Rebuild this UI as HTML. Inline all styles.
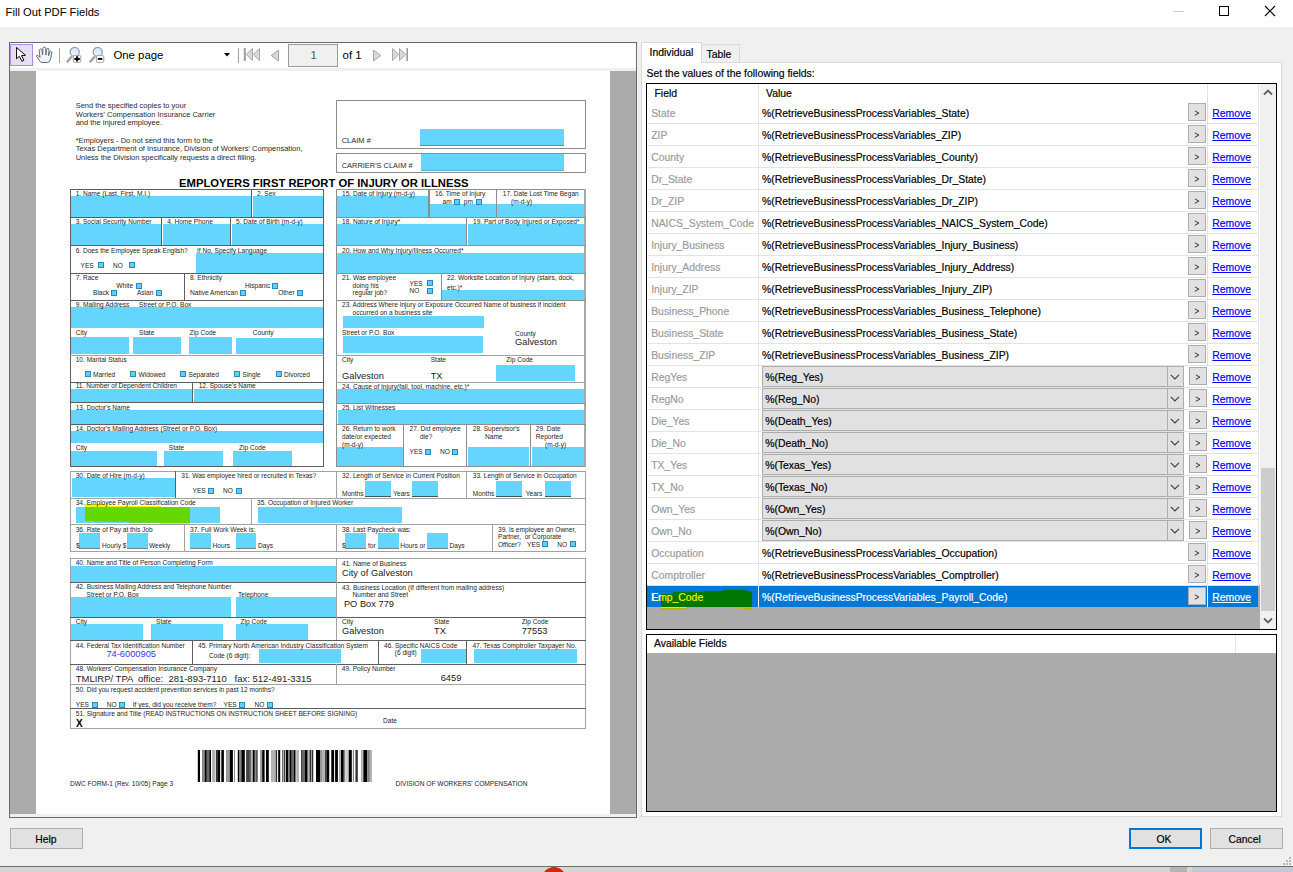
<!DOCTYPE html><html><head><meta charset="utf-8"><style>
html,body{margin:0;padding:0;width:1293px;height:872px;overflow:hidden;background:#f0f0f0;}
body{position:relative;font-family:"Liberation Sans",sans-serif;}
.t{position:absolute;white-space:pre;}
.ui{-webkit-text-stroke:0.18px currentColor;}
.r{position:absolute;}
svg{position:absolute;}
</style></head><body>
<div class="r" style="left:0px;top:0px;width:1293px;height:27px;background:#ffffff;"></div>
<div class="t " style="left:5.60px;top:7.12px;font-size:11.2px;line-height:11.2px;color:#000;">Fill Out PDF Fields</div>
<div class="r" style="left:1174px;top:11px;width:10px;height:1px;background:#c8c8c8;"></div>
<div class="r" style="left:1219px;top:6px;width:10px;height:10px;border:1px solid #000;box-sizing:border-box;"></div>
<svg style="left:1264px;top:5px" width="12" height="12"><path d="M1 1 L11 11 M11 1 L1 11" stroke="#000" stroke-width="1.1"/></svg>
<div class="r" style="left:0px;top:866px;width:1293px;height:1px;background:#6d6d6d;"></div>
<div class="r" style="left:0px;top:867px;width:1293px;height:5px;background:#d6d6d6;"></div>
<div class="r" style="left:1170px;top:867px;width:17px;height:5px;background:#b4b4b4;"></div>
<div class="r" style="left:1192px;top:867px;width:101px;height:5px;background:#c3cad6;"></div>
<svg style="left:539px;top:864px" width="30" height="8"><circle cx="15" cy="15" r="12" fill="#d42a00"/></svg>
<div class="t " style="left:1212.00px;top:870.64px;font-size:12px;line-height:12px;color:#222;font-weight:bold;">Make content</div>
<div class="r" style="left:0px;top:866px;width:1293px;height:1px;background:#6d6d6d;"></div>
<div class="r" style="left:1289px;top:857px;width:2px;height:2px;background:#b8b8b8;"></div>
<div class="r" style="left:1286px;top:860px;width:2px;height:2px;background:#b8b8b8;"></div>
<div class="r" style="left:1289px;top:860px;width:2px;height:2px;background:#b8b8b8;"></div>
<div class="r" style="left:1283px;top:863px;width:2px;height:2px;background:#b8b8b8;"></div>
<div class="r" style="left:1286px;top:863px;width:2px;height:2px;background:#b8b8b8;"></div>
<div class="r" style="left:1289px;top:863px;width:2px;height:2px;background:#b8b8b8;"></div>
<div class="r" style="left:9px;top:42px;width:628px;height:776px;background:#ffffff;border:1px solid #6a6a6a;box-sizing:border-box;"></div>
<div class="r" style="left:10px;top:68px;width:626px;height:3px;background:#f0f0f0;"></div>
<div class="r" style="left:10px;top:71px;width:626px;height:743px;background:#ababab;"></div>
<div class="r" style="left:10px;top:814px;width:626px;height:3px;background:#f0f0f0;"></div>
<div class="r" style="left:36px;top:71px;width:574px;height:743px;background:#ffffff;"></div>
<div class="r" style="left:10px;top:44px;width:23px;height:22px;background:#e6def2;border:1px solid #b18ce6;box-sizing:border-box;"></div>
<svg style="left:14px;top:46px" width="16" height="18"><path d="M2.5 1.5 L2.5 12.8 L5.3 10.3 L7.9 15.3 L9.9 14.3 L7.5 9.5 L11.5 9.3 Z" fill="#fff" stroke="#000" stroke-width="0.95"/></svg>
<svg style="left:35px;top:46px" width="18" height="18"><path d="M6 16.5 L1.6 10.6 Q1 9.2 2.8 9.3 L5 11.5 L4.2 4.6 Q4.4 2.9 5.6 2.9 Q6.7 2.9 6.9 4.3 L7.6 9 L7.8 2.6 Q8 1.1 9.3 1.1 Q10.7 1.1 10.8 2.5 L10.9 9 L11.6 3.4 Q11.9 2.2 13 2.3 Q14.1 2.5 14 3.7 L13.5 9.8 L14.8 6 Q15.2 5 16.1 5.3 Q17 5.7 16.8 6.7 L15.6 13 Q14.9 16.5 12.3 16.5 Z" fill="#f2f2f2" stroke="#5d6d82" stroke-width="1" stroke-linejoin="round"/></svg>
<div class="r" style="left:59px;top:48px;width:1px;height:15px;background:#a0a0a0;"></div>
<svg style="left:66px;top:46px" width="17" height="18"><defs><linearGradient id="lg66" x1="0" y1="0" x2="0" y2="1"><stop offset="0" stop-color="#cfe2fb"/><stop offset="1" stop-color="#f4f8ff"/></linearGradient></defs><line x1="0.8" y1="16.3" x2="5.8" y2="10.6" stroke="#a0a0a0" stroke-width="2.3"/><circle cx="8.7" cy="5.9" r="4.5" fill="url(#lg66)" stroke="#9c9c9c" stroke-width="1.3"/><rect x="7.4" y="9.4" width="7.4" height="7" rx="1.3" fill="#fff" stroke="#9a9a9a" stroke-width="0.9"/><path d="M11.1 10.3 V15.5 M8.4 12.9 H13.8" stroke="#000" stroke-width="2"/></svg>
<svg style="left:89px;top:46px" width="17" height="18"><defs><linearGradient id="lg89" x1="0" y1="0" x2="0" y2="1"><stop offset="0" stop-color="#cfe2fb"/><stop offset="1" stop-color="#f4f8ff"/></linearGradient></defs><line x1="0.8" y1="16.3" x2="5.8" y2="10.6" stroke="#a0a0a0" stroke-width="2.3"/><circle cx="8.7" cy="5.9" r="4.5" fill="url(#lg89)" stroke="#9c9c9c" stroke-width="1.3"/><rect x="7.4" y="9.4" width="7.4" height="7" rx="1.3" fill="#fff" stroke="#9a9a9a" stroke-width="0.9"/><path d="M8.9 12.9 H13.3" stroke="#000" stroke-width="1.9"/></svg>
<div class="t " style="left:113.40px;top:49.85px;font-size:11.4px;line-height:11.4px;color:#000;">One page</div>
<svg style="left:224px;top:53px" width="7" height="4"><path d="M0 0 H6 L3 3.5 Z" fill="#000"/></svg>
<div class="r" style="left:238px;top:48px;width:1px;height:15px;background:#a0a0a0;"></div>
<svg style="left:243px;top:47px" width="18" height="15"><rect x="0.8" y="1" width="2" height="13" fill="#a0a0a0"/><path d="M9.5 1.5 L3.2 7.5 L9.5 13.5 Z M16.5 1.5 L10.2 7.5 L16.5 13.5 Z" fill="#d8d8d8" stroke="#a8a8a8" stroke-width="1"/></svg>
<svg style="left:270px;top:47px" width="10" height="15"><path d="M8.5 3 L1.2 8.5 L8.5 14 Z" fill="#d8d8d8" stroke="#a8a8a8" stroke-width="1"/></svg>
<div class="r" style="left:288px;top:44px;width:50px;height:23px;background:#f0f0f0;border:1px solid #9c9c9c;box-sizing:border-box;"></div>
<div class="t " style="left:310.50px;top:50.15px;font-size:11.4px;line-height:11.4px;color:#555;">1</div>
<div class="t " style="left:342.60px;top:49.85px;font-size:11.4px;line-height:11.4px;color:#000;">of 1</div>
<svg style="left:372px;top:47px" width="10" height="15"><path d="M1.5 3 L8.8 8.5 L1.5 14 Z" fill="#d8d8d8" stroke="#a8a8a8" stroke-width="1"/></svg>
<svg style="left:391px;top:47px" width="18" height="15"><path d="M1.5 1.5 L7.8 7.5 L1.5 13.5 Z M8.5 1.5 L14.8 7.5 L8.5 13.5 Z" fill="#d8d8d8" stroke="#a8a8a8" stroke-width="1"/><rect x="15.4" y="1" width="1.6" height="13" fill="#9a9a9a"/></svg>
<div class="t " style="left:75.70px;top:102.45px;font-size:7.5px;line-height:7.5px;color:#2a2a2a;">Send the specified copies to your</div>
<div class="t " style="left:75.70px;top:110.85px;font-size:7.5px;line-height:7.5px;color:#2a2a2a;">Workers' Compensation Insurance Carrier</div>
<div class="t " style="left:75.70px;top:119.25px;font-size:7.5px;line-height:7.5px;color:#2a2a2a;">and the injured employee.</div>
<div class="t " style="left:75.70px;top:136.55px;font-size:7.5px;line-height:7.5px;color:#2a2a2a;">*Employers - Do not send this form to the</div>
<div class="t " style="left:75.70px;top:145.25px;font-size:7.5px;line-height:7.5px;color:#2a2a2a;">Texas Department of Insurance, Division of Workers' Compensation,</div>
<div class="t " style="left:75.70px;top:153.85px;font-size:7.5px;line-height:7.5px;color:#2a2a2a;">Unless the Division specifically requests a direct filling.</div>
<div class="r" style="left:336px;top:100px;width:250px;height:1px;background:#8c8c8c;"></div>
<div class="r" style="left:336px;top:148px;width:250px;height:1px;background:#8c8c8c;"></div>
<div class="r" style="left:336px;top:100px;width:1px;height:49px;background:#8c8c8c;"></div>
<div class="r" style="left:585px;top:100px;width:1px;height:49px;background:#8c8c8c;"></div>
<div class="r" style="left:420px;top:129px;width:144px;height:16px;background:#64d6fd;"></div>
<div class="r" style="left:420px;top:145px;width:144px;height:1px;background:#6a8d99;"></div>
<div class="t " style="left:341.70px;top:137.05px;font-size:7.5px;line-height:7.5px;color:#2a2a2a;">CLAIM #</div>
<div class="r" style="left:336px;top:153px;width:250px;height:1px;background:#8c8c8c;"></div>
<div class="r" style="left:336px;top:172px;width:250px;height:1px;background:#8c8c8c;"></div>
<div class="r" style="left:336px;top:153px;width:1px;height:20px;background:#8c8c8c;"></div>
<div class="r" style="left:585px;top:153px;width:1px;height:20px;background:#8c8c8c;"></div>
<div class="r" style="left:421px;top:154px;width:143px;height:16px;background:#64d6fd;"></div>
<div class="r" style="left:421px;top:170px;width:143px;height:1px;background:#4fb0d0;"></div>
<div class="t " style="left:341.70px;top:161.79px;font-size:7.45px;line-height:7.45px;color:#2a2a2a;">CARRIER'S CLAIM #</div>
<div class="t " style="left:179.10px;top:177.77px;font-size:11.25px;line-height:11.25px;color:#000;font-weight:bold;">EMPLOYERS FIRST REPORT OF INJURY OR ILLNESS</div>
<div class="r" style="left:71px;top:196px;width:180px;height:21px;background:#64d6fd;"></div>
<div class="r" style="left:253px;top:196px;width:70px;height:21px;background:#64d6fd;"></div>
<div class="r" style="left:71px;top:224px;width:90px;height:21px;background:#64d6fd;"></div>
<div class="r" style="left:163px;top:224px;width:67px;height:21px;background:#64d6fd;"></div>
<div class="r" style="left:232px;top:224px;width:91px;height:21px;background:#64d6fd;"></div>
<div class="r" style="left:196px;top:253px;width:127px;height:20px;background:#64d6fd;"></div>
<div class="r" style="left:71px;top:307px;width:252px;height:21px;background:#64d6fd;"></div>
<div class="r" style="left:71px;top:337px;width:58px;height:17px;background:#64d6fd;"></div>
<div class="r" style="left:133px;top:337px;width:48px;height:17px;background:#64d6fd;"></div>
<div class="r" style="left:189px;top:337px;width:43px;height:17px;background:#64d6fd;"></div>
<div class="r" style="left:236px;top:338px;width:87px;height:16px;background:#64d6fd;"></div>
<div class="r" style="left:71px;top:389px;width:121px;height:13px;background:#64d6fd;"></div>
<div class="r" style="left:194px;top:389px;width:129px;height:13px;background:#64d6fd;"></div>
<div class="r" style="left:71px;top:410px;width:252px;height:14px;background:#64d6fd;"></div>
<div class="r" style="left:71px;top:431px;width:252px;height:12px;background:#64d6fd;"></div>
<div class="r" style="left:71px;top:451px;width:86px;height:15px;background:#64d6fd;"></div>
<div class="r" style="left:164px;top:451px;width:59px;height:15px;background:#64d6fd;"></div>
<div class="r" style="left:233px;top:451px;width:59px;height:15px;background:#64d6fd;"></div>
<div class="r" style="left:70px;top:189px;width:254px;height:1px;background:#5e5e5e;"></div>
<div class="r" style="left:70px;top:466px;width:254px;height:1px;background:#5e5e5e;"></div>
<div class="r" style="left:70px;top:189px;width:1px;height:278px;background:#5e5e5e;"></div>
<div class="r" style="left:323px;top:189px;width:1px;height:278px;background:#5e5e5e;"></div>
<div class="r" style="left:70px;top:217px;width:254px;height:1px;background:#5e5e5e;"></div>
<div class="r" style="left:70px;top:245px;width:254px;height:1px;background:#5e5e5e;"></div>
<div class="r" style="left:70px;top:273px;width:254px;height:1px;background:#5e5e5e;"></div>
<div class="r" style="left:70px;top:300px;width:254px;height:1px;background:#5e5e5e;"></div>
<div class="r" style="left:70px;top:355px;width:254px;height:1px;background:#a2a2a2;"></div>
<div class="r" style="left:70px;top:382px;width:254px;height:1px;background:#5e5e5e;"></div>
<div class="r" style="left:70px;top:402px;width:254px;height:1px;background:#5e5e5e;"></div>
<div class="r" style="left:70px;top:424px;width:254px;height:1px;background:#5e5e5e;"></div>
<div class="r" style="left:251px;top:189px;width:1px;height:28px;background:#5e5e5e;"></div>
<div class="r" style="left:161px;top:217px;width:1px;height:28px;background:#5e5e5e;"></div>
<div class="r" style="left:230px;top:217px;width:1px;height:28px;background:#5e5e5e;"></div>
<div class="r" style="left:184px;top:273px;width:1px;height:27px;background:#5e5e5e;"></div>
<div class="r" style="left:192px;top:382px;width:1px;height:20px;background:#5e5e5e;"></div>
<div class="t " style="left:75.70px;top:191.24px;font-size:6.57px;line-height:6.57px;color:#1e1e1e;">1. Name (Last, First, M.I.)</div>
<div class="t " style="left:257.00px;top:191.24px;font-size:6.57px;line-height:6.57px;color:#1e1e1e;">2. Sex</div>
<div class="t " style="left:75.70px;top:219.24px;font-size:6.57px;line-height:6.57px;color:#1e1e1e;">3. Social Security Number</div>
<div class="t " style="left:167.20px;top:219.24px;font-size:6.57px;line-height:6.57px;color:#1e1e1e;">4. Home Phone</div>
<div class="t " style="left:236.00px;top:219.24px;font-size:6.57px;line-height:6.57px;color:#1e1e1e;">5. Date of Birth (m-d-y)</div>
<div class="t " style="left:75.70px;top:248.04px;font-size:6.57px;line-height:6.57px;color:#1e1e1e;">6. Does the Employee Speak English?</div>
<div class="t " style="left:197.00px;top:248.04px;font-size:6.57px;line-height:6.57px;color:#1e1e1e;">If No, Specify Language</div>
<div class="t " style="left:80.60px;top:262.84px;font-size:6.57px;line-height:6.57px;color:#1e1e1e;">YES</div>
<div class="r" style="left:98px;top:262px;width:6px;height:6px;background:#5fd0f5;border:1px solid #2a8ab8;box-sizing:border-box;"></div>
<div class="t " style="left:113.00px;top:262.84px;font-size:6.57px;line-height:6.57px;color:#1e1e1e;">NO</div>
<div class="r" style="left:129px;top:262px;width:6px;height:6px;background:#5fd0f5;border:1px solid #2a8ab8;box-sizing:border-box;"></div>
<div class="t " style="left:75.70px;top:275.24px;font-size:6.57px;line-height:6.57px;color:#1e1e1e;">7. Race</div>
<div class="t " style="left:116.30px;top:282.84px;font-size:6.57px;line-height:6.57px;color:#1e1e1e;">White</div>
<div class="r" style="left:136px;top:283px;width:6px;height:6px;background:#5fd0f5;border:1px solid #2a8ab8;box-sizing:border-box;"></div>
<div class="t " style="left:93.00px;top:290.44px;font-size:6.57px;line-height:6.57px;color:#1e1e1e;">Black</div>
<div class="r" style="left:111px;top:290px;width:6px;height:6px;background:#5fd0f5;border:1px solid #2a8ab8;box-sizing:border-box;"></div>
<div class="t " style="left:136.90px;top:290.44px;font-size:6.57px;line-height:6.57px;color:#1e1e1e;">Asian</div>
<div class="r" style="left:156px;top:290px;width:6px;height:6px;background:#5fd0f5;border:1px solid #2a8ab8;box-sizing:border-box;"></div>
<div class="t " style="left:190.00px;top:275.24px;font-size:6.57px;line-height:6.57px;color:#1e1e1e;">8. Ethnicity</div>
<div class="t " style="left:245.00px;top:282.84px;font-size:6.57px;line-height:6.57px;color:#1e1e1e;">Hispanic</div>
<div class="r" style="left:272px;top:283px;width:6px;height:6px;background:#5fd0f5;border:1px solid #2a8ab8;box-sizing:border-box;"></div>
<div class="t " style="left:190.00px;top:290.44px;font-size:6.57px;line-height:6.57px;color:#1e1e1e;">Native American</div>
<div class="r" style="left:240px;top:290px;width:6px;height:6px;background:#5fd0f5;border:1px solid #2a8ab8;box-sizing:border-box;"></div>
<div class="t " style="left:278.20px;top:290.44px;font-size:6.57px;line-height:6.57px;color:#1e1e1e;">Other</div>
<div class="r" style="left:297px;top:290px;width:6px;height:6px;background:#5fd0f5;border:1px solid #2a8ab8;box-sizing:border-box;"></div>
<div class="t " style="left:75.70px;top:302.24px;font-size:6.57px;line-height:6.57px;color:#1e1e1e;">9. Mailing Address</div>
<div class="t " style="left:139.00px;top:302.24px;font-size:6.57px;line-height:6.57px;color:#1e1e1e;">Street or P.O. Box</div>
<div class="t " style="left:75.70px;top:330.24px;font-size:6.57px;line-height:6.57px;color:#1e1e1e;">City</div>
<div class="t " style="left:139.00px;top:330.24px;font-size:6.57px;line-height:6.57px;color:#1e1e1e;">State</div>
<div class="t " style="left:189.60px;top:330.24px;font-size:6.57px;line-height:6.57px;color:#1e1e1e;">Zip Code</div>
<div class="t " style="left:252.80px;top:330.24px;font-size:6.57px;line-height:6.57px;color:#1e1e1e;">County</div>
<div class="t " style="left:75.70px;top:356.84px;font-size:6.57px;line-height:6.57px;color:#1e1e1e;">10. Marital Status</div>
<div class="r" style="left:85px;top:371px;width:6px;height:6px;background:#5fd0f5;border:1px solid #2a8ab8;box-sizing:border-box;"></div>
<div class="t " style="left:93.00px;top:372.24px;font-size:6.57px;line-height:6.57px;color:#1e1e1e;">Married</div>
<div class="r" style="left:130px;top:371px;width:6px;height:6px;background:#5fd0f5;border:1px solid #2a8ab8;box-sizing:border-box;"></div>
<div class="t " style="left:138.50px;top:372.24px;font-size:6.57px;line-height:6.57px;color:#1e1e1e;">Widowed</div>
<div class="r" style="left:180px;top:371px;width:6px;height:6px;background:#5fd0f5;border:1px solid #2a8ab8;box-sizing:border-box;"></div>
<div class="t " style="left:188.50px;top:372.24px;font-size:6.57px;line-height:6.57px;color:#1e1e1e;">Separated</div>
<div class="r" style="left:234px;top:371px;width:6px;height:6px;background:#5fd0f5;border:1px solid #2a8ab8;box-sizing:border-box;"></div>
<div class="t " style="left:242.50px;top:372.24px;font-size:6.57px;line-height:6.57px;color:#1e1e1e;">Single</div>
<div class="r" style="left:276px;top:371px;width:6px;height:6px;background:#5fd0f5;border:1px solid #2a8ab8;box-sizing:border-box;"></div>
<div class="t " style="left:284.00px;top:372.24px;font-size:6.57px;line-height:6.57px;color:#1e1e1e;">Divorced</div>
<div class="t " style="left:75.70px;top:383.24px;font-size:6.57px;line-height:6.57px;color:#1e1e1e;">11. Number of Dependent Children</div>
<div class="t " style="left:198.70px;top:383.24px;font-size:6.57px;line-height:6.57px;color:#1e1e1e;">12. Spouse's Name</div>
<div class="t " style="left:75.70px;top:404.64px;font-size:6.57px;line-height:6.57px;color:#1e1e1e;">13. Doctor's Name</div>
<div class="t " style="left:75.70px;top:425.74px;font-size:6.57px;line-height:6.57px;color:#1e1e1e;">14. Doctor's Mailing Address (Street or P.O. Box)</div>
<div class="t " style="left:75.70px;top:445.24px;font-size:6.57px;line-height:6.57px;color:#1e1e1e;">City</div>
<div class="t " style="left:168.80px;top:445.24px;font-size:6.57px;line-height:6.57px;color:#1e1e1e;">State</div>
<div class="t " style="left:239.00px;top:445.24px;font-size:6.57px;line-height:6.57px;color:#1e1e1e;">Zip Code</div>
<div class="r" style="left:337px;top:196px;width:91px;height:21px;background:#64d6fd;"></div>
<div class="r" style="left:430px;top:204px;width:66px;height:13px;background:#64d6fd;"></div>
<div class="r" style="left:497px;top:204px;width:88px;height:13px;background:#64d6fd;"></div>
<div class="r" style="left:337px;top:224px;width:129px;height:21px;background:#64d6fd;"></div>
<div class="r" style="left:468px;top:224px;width:117px;height:21px;background:#64d6fd;"></div>
<div class="r" style="left:337px;top:253px;width:248px;height:20px;background:#64d6fd;"></div>
<div class="r" style="left:442px;top:290px;width:143px;height:10px;background:#64d6fd;"></div>
<div class="r" style="left:343px;top:316px;width:141px;height:12px;background:#64d6fd;"></div>
<div class="r" style="left:343px;top:336px;width:140px;height:17px;background:#64d6fd;"></div>
<div class="r" style="left:496px;top:365px;width:79px;height:16px;background:#64d6fd;"></div>
<div class="r" style="left:337px;top:389px;width:248px;height:14px;background:#64d6fd;"></div>
<div class="r" style="left:338px;top:410px;width:247px;height:14px;background:#64d6fd;"></div>
<div class="r" style="left:337px;top:447px;width:66px;height:19px;background:#64d6fd;"></div>
<div class="r" style="left:468px;top:447px;width:61px;height:19px;background:#64d6fd;"></div>
<div class="r" style="left:532px;top:447px;width:53px;height:19px;background:#64d6fd;"></div>
<div class="r" style="left:336px;top:189px;width:250px;height:1px;background:#8e8e8e;"></div>
<div class="r" style="left:336px;top:466px;width:250px;height:1px;background:#8e8e8e;"></div>
<div class="r" style="left:336px;top:189px;width:1px;height:278px;background:#8e8e8e;"></div>
<div class="r" style="left:585px;top:189px;width:1px;height:278px;background:#8e8e8e;"></div>
<div class="r" style="left:584px;top:189px;width:2px;height:278px;background:#a8a8a8;"></div>
<div class="r" style="left:336px;top:217px;width:250px;height:1px;background:#8e8e8e;"></div>
<div class="r" style="left:336px;top:245px;width:250px;height:1px;background:#8e8e8e;"></div>
<div class="r" style="left:336px;top:273px;width:250px;height:1px;background:#8e8e8e;"></div>
<div class="r" style="left:336px;top:300px;width:250px;height:1px;background:#8e8e8e;"></div>
<div class="r" style="left:336px;top:355px;width:250px;height:1px;background:#a2a2a2;"></div>
<div class="r" style="left:336px;top:382px;width:250px;height:1px;background:#a2a2a2;"></div>
<div class="r" style="left:336px;top:403px;width:250px;height:1px;background:#8e8e8e;"></div>
<div class="r" style="left:336px;top:424px;width:250px;height:1px;background:#8e8e8e;"></div>
<div class="r" style="left:428px;top:189px;width:2px;height:28px;background:#8e8e8e;"></div>
<div class="r" style="left:496px;top:189px;width:1px;height:28px;background:#8e8e8e;"></div>
<div class="r" style="left:466px;top:217px;width:1px;height:28px;background:#8e8e8e;"></div>
<div class="r" style="left:441px;top:273px;width:1px;height:27px;background:#8e8e8e;"></div>
<div class="r" style="left:403px;top:424px;width:1px;height:42px;background:#8e8e8e;"></div>
<div class="r" style="left:466px;top:424px;width:1px;height:42px;background:#8e8e8e;"></div>
<div class="r" style="left:530px;top:424px;width:1px;height:42px;background:#8e8e8e;"></div>
<div class="t " style="left:342.00px;top:191.24px;font-size:6.57px;line-height:6.57px;color:#1e1e1e;">15. Date of Injury (m-d-y)</div>
<div class="t " style="left:435.00px;top:191.24px;font-size:6.57px;line-height:6.57px;color:#1e1e1e;">16. Time of Injury</div>
<div class="t " style="left:442.60px;top:199.24px;font-size:6.57px;line-height:6.57px;color:#1e1e1e;">am</div>
<div class="r" style="left:454px;top:199px;width:6px;height:6px;background:#5fd0f5;border:1px solid #2a8ab8;box-sizing:border-box;"></div>
<div class="t " style="left:463.80px;top:199.24px;font-size:6.57px;line-height:6.57px;color:#1e1e1e;">pm</div>
<div class="r" style="left:476px;top:199px;width:6px;height:6px;background:#5fd0f5;border:1px solid #2a8ab8;box-sizing:border-box;"></div>
<div class="t " style="left:502.80px;top:191.24px;font-size:6.57px;line-height:6.57px;color:#1e1e1e;">17. Date Lost Time Began</div>
<div class="t " style="left:511.00px;top:199.24px;font-size:6.57px;line-height:6.57px;color:#1e1e1e;">(m-d-y)</div>
<div class="t " style="left:342.00px;top:219.24px;font-size:6.57px;line-height:6.57px;color:#1e1e1e;">18. Nature of Injury*</div>
<div class="t " style="left:473.00px;top:219.24px;font-size:6.57px;line-height:6.57px;color:#1e1e1e;">19. Part of Body Injured or Exposed*</div>
<div class="t " style="left:342.00px;top:247.94px;font-size:6.57px;line-height:6.57px;color:#1e1e1e;">20. How and Why Injury/Illness Occurred*</div>
<div class="t " style="left:342.00px;top:275.44px;font-size:6.57px;line-height:6.57px;color:#1e1e1e;">21. Was employee</div>
<div class="t " style="left:352.50px;top:282.94px;font-size:6.57px;line-height:6.57px;color:#1e1e1e;">doing his</div>
<div class="t " style="left:352.50px;top:290.24px;font-size:6.57px;line-height:6.57px;color:#1e1e1e;">regular job?</div>
<div class="t " style="left:409.60px;top:280.84px;font-size:6.57px;line-height:6.57px;color:#1e1e1e;">YES</div>
<div class="r" style="left:427px;top:280px;width:6px;height:6px;background:#5fd0f5;border:1px solid #2a8ab8;box-sizing:border-box;"></div>
<div class="t " style="left:409.60px;top:288.24px;font-size:6.57px;line-height:6.57px;color:#1e1e1e;">NO</div>
<div class="r" style="left:427px;top:288px;width:6px;height:6px;background:#5fd0f5;border:1px solid #2a8ab8;box-sizing:border-box;"></div>
<div class="t " style="left:447.00px;top:275.44px;font-size:6.57px;line-height:6.57px;color:#1e1e1e;">22. Worksite Location of Injury (stairs, dock,</div>
<div class="t " style="left:447.00px;top:284.94px;font-size:6.57px;line-height:6.57px;color:#1e1e1e;">etc.)*</div>
<div class="t " style="left:342.00px;top:302.44px;font-size:6.57px;line-height:6.57px;color:#1e1e1e;">23. Address Where Injury or Exposure Occurred Name of business if incident</div>
<div class="t " style="left:352.60px;top:309.84px;font-size:6.57px;line-height:6.57px;color:#1e1e1e;">occurred on a business site</div>
<div class="t " style="left:342.00px;top:330.04px;font-size:6.57px;line-height:6.57px;color:#1e1e1e;">Street or P.O. Box</div>
<div class="t " style="left:515.00px;top:330.64px;font-size:6.57px;line-height:6.57px;color:#1e1e1e;">County</div>
<div class="t " style="left:515.00px;top:338.13px;font-size:9.3px;line-height:9.3px;color:#222;">Galveston</div>
<div class="t " style="left:342.00px;top:357.44px;font-size:6.57px;line-height:6.57px;color:#1e1e1e;">City</div>
<div class="t " style="left:430.70px;top:357.44px;font-size:6.57px;line-height:6.57px;color:#1e1e1e;">State</div>
<div class="t " style="left:506.30px;top:357.24px;font-size:6.57px;line-height:6.57px;color:#1e1e1e;">Zip Code</div>
<div class="t " style="left:342.00px;top:372.43px;font-size:9.3px;line-height:9.3px;color:#222;">Galveston</div>
<div class="t " style="left:430.70px;top:372.43px;font-size:9.3px;line-height:9.3px;color:#222;">TX</div>
<div class="t " style="left:342.00px;top:383.94px;font-size:6.57px;line-height:6.57px;color:#1e1e1e;">24. Cause of Injury(fall, tool, machine, etc.)*</div>
<div class="t " style="left:342.00px;top:404.54px;font-size:6.57px;line-height:6.57px;color:#1e1e1e;">25. List Witnesses</div>
<div class="t " style="left:342.00px;top:426.44px;font-size:6.57px;line-height:6.57px;color:#1e1e1e;">26. Return to work</div>
<div class="t " style="left:342.00px;top:433.84px;font-size:6.57px;line-height:6.57px;color:#1e1e1e;">date/or expected</div>
<div class="t " style="left:342.00px;top:441.64px;font-size:6.57px;line-height:6.57px;color:#1e1e1e;">(m-d-y)</div>
<div class="t " style="left:409.60px;top:426.44px;font-size:6.57px;line-height:6.57px;color:#1e1e1e;">27. Did employee</div>
<div class="t " style="left:419.90px;top:433.84px;font-size:6.57px;line-height:6.57px;color:#1e1e1e;">die?</div>
<div class="t " style="left:409.60px;top:449.04px;font-size:6.57px;line-height:6.57px;color:#1e1e1e;">YES</div>
<div class="r" style="left:425px;top:449px;width:6px;height:6px;background:#5fd0f5;border:1px solid #2a8ab8;box-sizing:border-box;"></div>
<div class="t " style="left:439.90px;top:449.04px;font-size:6.57px;line-height:6.57px;color:#1e1e1e;">NO</div>
<div class="r" style="left:452px;top:449px;width:6px;height:6px;background:#5fd0f5;border:1px solid #2a8ab8;box-sizing:border-box;"></div>
<div class="t " style="left:472.80px;top:426.44px;font-size:6.57px;line-height:6.57px;color:#1e1e1e;">28. Supervisor's</div>
<div class="t " style="left:485.00px;top:433.84px;font-size:6.57px;line-height:6.57px;color:#1e1e1e;">Name</div>
<div class="t " style="left:535.80px;top:426.44px;font-size:6.57px;line-height:6.57px;color:#1e1e1e;">29. Date</div>
<div class="t " style="left:535.80px;top:433.84px;font-size:6.57px;line-height:6.57px;color:#1e1e1e;">Reported</div>
<div class="t " style="left:545.00px;top:441.64px;font-size:6.57px;line-height:6.57px;color:#1e1e1e;">(m-d-y)</div>
<div class="r" style="left:72px;top:478px;width:103px;height:19px;background:#64d6fd;"></div>
<div class="r" style="left:365px;top:481px;width:26px;height:16px;background:#64d6fd;"></div>
<div class="r" style="left:365px;top:496px;width:26px;height:1px;background:#3c5a66;"></div>
<div class="r" style="left:412px;top:481px;width:26px;height:16px;background:#64d6fd;"></div>
<div class="r" style="left:412px;top:496px;width:26px;height:1px;background:#3c5a66;"></div>
<div class="r" style="left:496px;top:481px;width:26px;height:16px;background:#64d6fd;"></div>
<div class="r" style="left:496px;top:496px;width:26px;height:1px;background:#3c5a66;"></div>
<div class="r" style="left:545px;top:481px;width:26px;height:16px;background:#64d6fd;"></div>
<div class="r" style="left:545px;top:496px;width:26px;height:1px;background:#3c5a66;"></div>
<div class="r" style="left:76px;top:507px;width:144px;height:16px;background:#64d6fd;"></div>
<div class="r" style="left:258px;top:507px;width:144px;height:16px;background:#64d6fd;"></div>
<div class="r" style="left:79px;top:533px;width:21px;height:15px;background:#64d6fd;"></div>
<div class="r" style="left:79px;top:548px;width:21px;height:1px;background:#6f8890;"></div>
<div class="r" style="left:127px;top:533px;width:21px;height:15px;background:#64d6fd;"></div>
<div class="r" style="left:127px;top:548px;width:21px;height:1px;background:#6f8890;"></div>
<div class="r" style="left:190px;top:533px;width:21px;height:15px;background:#64d6fd;"></div>
<div class="r" style="left:190px;top:548px;width:21px;height:1px;background:#6f8890;"></div>
<div class="r" style="left:236px;top:533px;width:20px;height:15px;background:#64d6fd;"></div>
<div class="r" style="left:236px;top:548px;width:20px;height:1px;background:#6f8890;"></div>
<div class="r" style="left:345px;top:533px;width:21px;height:15px;background:#64d6fd;"></div>
<div class="r" style="left:345px;top:548px;width:21px;height:1px;background:#6f8890;"></div>
<div class="r" style="left:378px;top:533px;width:21px;height:15px;background:#64d6fd;"></div>
<div class="r" style="left:378px;top:548px;width:21px;height:1px;background:#6f8890;"></div>
<div class="r" style="left:427px;top:533px;width:21px;height:15px;background:#64d6fd;"></div>
<div class="r" style="left:427px;top:548px;width:21px;height:1px;background:#6f8890;"></div>
<svg style="left:84px;top:503px" width="107" height="22"><path d="M1 1 H23 V3 H77 V4.2 H1 Z" fill="#f6f600"/><path d="M1 4 H106 V20.5 H76 V19.8 H45 V18.8 H10 V17.9 H1 Z" fill="#64d800"/><path d="M76 20.3 H106 V21.2 H76 Z" fill="#e8e800"/></svg>
<div class="r" style="left:70px;top:471px;width:516px;height:1px;background:#a2a2a2;"></div>
<div class="r" style="left:70px;top:551px;width:516px;height:1px;background:#a2a2a2;"></div>
<div class="r" style="left:70px;top:471px;width:1px;height:81px;background:#a2a2a2;"></div>
<div class="r" style="left:585px;top:471px;width:1px;height:81px;background:#a2a2a2;"></div>
<div class="r" style="left:70px;top:498px;width:516px;height:1px;background:#a2a2a2;"></div>
<div class="r" style="left:70px;top:524px;width:516px;height:1px;background:#a2a2a2;"></div>
<div class="r" style="left:175px;top:471px;width:1px;height:27px;background:#5e5e5e;"></div>
<div class="r" style="left:336px;top:471px;width:1px;height:27px;background:#a2a2a2;"></div>
<div class="r" style="left:466px;top:471px;width:1px;height:27px;background:#a2a2a2;"></div>
<div class="r" style="left:251px;top:498px;width:1px;height:26px;background:#a2a2a2;"></div>
<div class="r" style="left:184px;top:524px;width:1px;height:27px;background:#a2a2a2;"></div>
<div class="r" style="left:336px;top:524px;width:1px;height:27px;background:#a2a2a2;"></div>
<div class="r" style="left:492px;top:524px;width:1px;height:27px;background:#a2a2a2;"></div>
<div class="t " style="left:75.70px;top:473.04px;font-size:6.57px;line-height:6.57px;color:#1e1e1e;">30. Date of Hire (m-d-y)</div>
<div class="t " style="left:181.30px;top:473.04px;font-size:6.57px;line-height:6.57px;color:#1e1e1e;">31. Was employee hired or recruited in Texas?</div>
<div class="t " style="left:192.50px;top:488.04px;font-size:6.57px;line-height:6.57px;color:#1e1e1e;">YES</div>
<div class="r" style="left:208px;top:488px;width:6px;height:6px;background:#5fd0f5;border:1px solid #2a8ab8;box-sizing:border-box;"></div>
<div class="t " style="left:223.00px;top:488.04px;font-size:6.57px;line-height:6.57px;color:#1e1e1e;">NO</div>
<div class="r" style="left:236px;top:488px;width:6px;height:6px;background:#5fd0f5;border:1px solid #2a8ab8;box-sizing:border-box;"></div>
<div class="t " style="left:342.00px;top:473.04px;font-size:6.57px;line-height:6.57px;color:#1e1e1e;">32. Length of Service in Current Position</div>
<div class="t " style="left:342.00px;top:491.14px;font-size:6.57px;line-height:6.57px;color:#1e1e1e;">Months</div>
<div class="t " style="left:393.30px;top:491.14px;font-size:6.57px;line-height:6.57px;color:#1e1e1e;">Years</div>
<div class="t " style="left:472.80px;top:473.04px;font-size:6.57px;line-height:6.57px;color:#1e1e1e;">33. Length of Service in Occupation</div>
<div class="t " style="left:472.80px;top:491.14px;font-size:6.57px;line-height:6.57px;color:#1e1e1e;">Months</div>
<div class="t " style="left:525.80px;top:491.14px;font-size:6.57px;line-height:6.57px;color:#1e1e1e;">Years</div>
<div class="t " style="left:75.70px;top:499.74px;font-size:6.57px;line-height:6.57px;color:#1e1e1e;">34. Employee Payroll Classification Code</div>
<div class="t " style="left:257.00px;top:499.74px;font-size:6.57px;line-height:6.57px;color:#1e1e1e;">35. Occupation of Injured Worker</div>
<div class="t " style="left:75.70px;top:526.54px;font-size:6.57px;line-height:6.57px;color:#1e1e1e;">36. Rate of Pay at this Job</div>
<div class="t " style="left:76.00px;top:542.74px;font-size:6.57px;line-height:6.57px;color:#1e1e1e;">$</div>
<div class="t " style="left:102.00px;top:542.74px;font-size:6.57px;line-height:6.57px;color:#1e1e1e;">Hourly $</div>
<div class="t " style="left:149.00px;top:542.74px;font-size:6.57px;line-height:6.57px;color:#1e1e1e;">Weekly</div>
<div class="t " style="left:190.00px;top:526.94px;font-size:6.57px;line-height:6.57px;color:#1e1e1e;">37. Full Work Week is:</div>
<div class="t " style="left:212.60px;top:542.74px;font-size:6.57px;line-height:6.57px;color:#1e1e1e;">Hours</div>
<div class="t " style="left:258.00px;top:542.74px;font-size:6.57px;line-height:6.57px;color:#1e1e1e;">Days</div>
<div class="t " style="left:342.00px;top:526.54px;font-size:6.57px;line-height:6.57px;color:#1e1e1e;">38. Last Paycheck was:</div>
<div class="t " style="left:342.00px;top:542.74px;font-size:6.57px;line-height:6.57px;color:#1e1e1e;">$</div>
<div class="t " style="left:368.00px;top:542.74px;font-size:6.57px;line-height:6.57px;color:#1e1e1e;">for</div>
<div class="t " style="left:400.20px;top:542.74px;font-size:6.57px;line-height:6.57px;color:#1e1e1e;">Hours or</div>
<div class="t " style="left:449.60px;top:542.74px;font-size:6.57px;line-height:6.57px;color:#1e1e1e;">Days</div>
<div class="t " style="left:498.00px;top:526.54px;font-size:6.57px;line-height:6.57px;color:#1e1e1e;">39. Is employee an Owner,</div>
<div class="t " style="left:498.00px;top:534.44px;font-size:6.57px;line-height:6.57px;color:#1e1e1e;">Partner,  or Corporate</div>
<div class="t " style="left:498.00px;top:541.64px;font-size:6.57px;line-height:6.57px;color:#1e1e1e;">Officer?</div>
<div class="t " style="left:527.00px;top:541.64px;font-size:6.57px;line-height:6.57px;color:#1e1e1e;">YES</div>
<div class="r" style="left:542px;top:541px;width:6px;height:6px;background:#5fd0f5;border:1px solid #2a8ab8;box-sizing:border-box;"></div>
<div class="t " style="left:557.20px;top:541.64px;font-size:6.57px;line-height:6.57px;color:#1e1e1e;">NO</div>
<div class="r" style="left:570px;top:541px;width:6px;height:6px;background:#5fd0f5;border:1px solid #2a8ab8;box-sizing:border-box;"></div>
<div class="r" style="left:71px;top:566px;width:265px;height:16px;background:#64d6fd;"></div>
<div class="r" style="left:71px;top:597px;width:160px;height:20px;background:#64d6fd;"></div>
<div class="r" style="left:236px;top:597px;width:100px;height:20px;background:#64d6fd;"></div>
<div class="r" style="left:71px;top:624px;width:72px;height:16px;background:#64d6fd;"></div>
<div class="r" style="left:151px;top:624px;width:72px;height:16px;background:#64d6fd;"></div>
<div class="r" style="left:236px;top:624px;width:72px;height:16px;background:#64d6fd;"></div>
<div class="r" style="left:259px;top:649px;width:82px;height:14px;background:#64d6fd;"></div>
<div class="r" style="left:421px;top:649px;width:46px;height:14px;background:#64d6fd;"></div>
<div class="r" style="left:474px;top:649px;width:103px;height:14px;background:#64d6fd;"></div>
<div class="r" style="left:70px;top:558px;width:516px;height:1px;background:#a2a2a2;"></div>
<div class="r" style="left:70px;top:728px;width:516px;height:1px;background:#a2a2a2;"></div>
<div class="r" style="left:70px;top:558px;width:1px;height:171px;background:#a2a2a2;"></div>
<div class="r" style="left:585px;top:558px;width:1px;height:171px;background:#a2a2a2;"></div>
<div class="r" style="left:70px;top:582px;width:516px;height:1px;background:#5e5e5e;"></div>
<div class="r" style="left:70px;top:617px;width:516px;height:1px;background:#5e5e5e;"></div>
<div class="r" style="left:70px;top:640px;width:516px;height:1px;background:#5e5e5e;"></div>
<div class="r" style="left:70px;top:664px;width:516px;height:1px;background:#5e5e5e;"></div>
<div class="r" style="left:70px;top:684px;width:516px;height:1px;background:#a2a2a2;"></div>
<div class="r" style="left:70px;top:708px;width:516px;height:1px;background:#5e5e5e;"></div>
<div class="r" style="left:336px;top:558px;width:1px;height:82px;background:#a2a2a2;"></div>
<div class="r" style="left:192px;top:640px;width:1px;height:24px;background:#5e5e5e;"></div>
<div class="r" style="left:378px;top:640px;width:1px;height:24px;background:#5e5e5e;"></div>
<div class="r" style="left:466px;top:640px;width:1px;height:24px;background:#5e5e5e;"></div>
<div class="r" style="left:336px;top:664px;width:1px;height:20px;background:#a2a2a2;"></div>
<div class="t " style="left:75.70px;top:560.44px;font-size:6.57px;line-height:6.57px;color:#1e1e1e;">40. Name and Title of Person Completing Form</div>
<div class="t " style="left:342.00px;top:560.94px;font-size:6.57px;line-height:6.57px;color:#1e1e1e;">41. Name of Business</div>
<div class="t " style="left:342.00px;top:568.73px;font-size:9.3px;line-height:9.3px;color:#222;">City of Galveston</div>
<div class="t " style="left:75.70px;top:584.04px;font-size:6.57px;line-height:6.57px;color:#1e1e1e;">42. Business Mailing Address and Telephone Number</div>
<div class="t " style="left:86.50px;top:591.54px;font-size:6.57px;line-height:6.57px;color:#1e1e1e;">Street or P.O. Box</div>
<div class="t " style="left:238.00px;top:591.64px;font-size:6.57px;line-height:6.57px;color:#1e1e1e;">Telephone</div>
<div class="t " style="left:342.00px;top:584.74px;font-size:6.57px;line-height:6.57px;color:#1e1e1e;">43. Business Location (If different from mailing address)</div>
<div class="t " style="left:352.60px;top:592.34px;font-size:6.57px;line-height:6.57px;color:#1e1e1e;">Number and Street</div>
<div class="t " style="left:343.90px;top:600.33px;font-size:9.3px;line-height:9.3px;color:#222;">PO Box 779</div>
<div class="t " style="left:75.70px;top:618.64px;font-size:6.57px;line-height:6.57px;color:#1e1e1e;">City</div>
<div class="t " style="left:156.00px;top:618.64px;font-size:6.57px;line-height:6.57px;color:#1e1e1e;">State</div>
<div class="t " style="left:240.50px;top:618.64px;font-size:6.57px;line-height:6.57px;color:#1e1e1e;">Zip Code</div>
<div class="t " style="left:342.00px;top:619.44px;font-size:6.57px;line-height:6.57px;color:#1e1e1e;">City</div>
<div class="t " style="left:434.00px;top:619.44px;font-size:6.57px;line-height:6.57px;color:#1e1e1e;">State</div>
<div class="t " style="left:521.70px;top:619.44px;font-size:6.57px;line-height:6.57px;color:#1e1e1e;">Zip Code</div>
<div class="t " style="left:342.00px;top:626.83px;font-size:9.3px;line-height:9.3px;color:#222;">Galveston</div>
<div class="t " style="left:434.00px;top:626.83px;font-size:9.3px;line-height:9.3px;color:#222;">TX</div>
<div class="t " style="left:521.70px;top:626.83px;font-size:9.3px;line-height:9.3px;color:#222;">77553</div>
<div class="t " style="left:75.80px;top:642.64px;font-size:6.57px;line-height:6.57px;color:#1e1e1e;">44. Federal Tax Identification Number</div>
<div class="t " style="left:106.40px;top:650.33px;font-size:9.3px;line-height:9.3px;color:#3636ff;">74-6000905</div>
<div class="t " style="left:198.00px;top:642.74px;font-size:6.57px;line-height:6.57px;color:#1e1e1e;">45. Primary North American Industry Classification System</div>
<div class="t " style="left:209.00px;top:653.24px;font-size:6.57px;line-height:6.57px;color:#1e1e1e;">Code (6 digit):</div>
<div class="t " style="left:384.00px;top:642.74px;font-size:6.57px;line-height:6.57px;color:#1e1e1e;">46. Specific NAICS Code</div>
<div class="t " style="left:394.80px;top:650.24px;font-size:6.57px;line-height:6.57px;color:#1e1e1e;">(6 digit)</div>
<div class="t " style="left:472.40px;top:642.74px;font-size:6.57px;line-height:6.57px;color:#1e1e1e;">47. Texas Comptroller Taxpayer No.</div>
<div class="t " style="left:75.80px;top:666.04px;font-size:6.57px;line-height:6.57px;color:#1e1e1e;">48. Workers' Compensation Insurance Company</div>
<div class="t " style="left:75.80px;top:673.68px;font-size:9.47px;line-height:9.47px;color:#222;">TMLIRP/ TPA  office:  281-893-7110   fax: 512-491-3315</div>
<div class="t " style="left:341.80px;top:666.04px;font-size:6.57px;line-height:6.57px;color:#1e1e1e;">49. Policy Number</div>
<div class="t " style="left:440.70px;top:673.83px;font-size:9.3px;line-height:9.3px;color:#222;">6459</div>
<div class="t " style="left:75.80px;top:687.04px;font-size:6.57px;line-height:6.57px;color:#1e1e1e;">50. Did you request accident prevention services in past 12 months?</div>
<div class="t " style="left:75.80px;top:701.94px;font-size:6.57px;line-height:6.57px;color:#1e1e1e;">YES</div>
<div class="r" style="left:92px;top:702px;width:6px;height:6px;background:#5fd0f5;border:1px solid #2a8ab8;box-sizing:border-box;"></div>
<div class="t " style="left:106.80px;top:701.94px;font-size:6.57px;line-height:6.57px;color:#1e1e1e;">NO</div>
<div class="r" style="left:119px;top:702px;width:6px;height:6px;background:#5fd0f5;border:1px solid #2a8ab8;box-sizing:border-box;"></div>
<div class="t " style="left:132.80px;top:701.94px;font-size:6.57px;line-height:6.57px;color:#1e1e1e;">If yes, did you receive them?</div>
<div class="t " style="left:223.60px;top:701.94px;font-size:6.57px;line-height:6.57px;color:#1e1e1e;">YES</div>
<div class="r" style="left:239px;top:702px;width:6px;height:6px;background:#5fd0f5;border:1px solid #2a8ab8;box-sizing:border-box;"></div>
<div class="t " style="left:254.40px;top:701.94px;font-size:6.57px;line-height:6.57px;color:#1e1e1e;">NO</div>
<div class="r" style="left:267px;top:702px;width:6px;height:6px;background:#5fd0f5;border:1px solid #2a8ab8;box-sizing:border-box;"></div>
<div class="t " style="left:75.80px;top:710.54px;font-size:6.57px;line-height:6.57px;color:#1e1e1e;">51. Signature and Title (READ INSTRUCTIONS ON INSTRUCTION SHEET BEFORE SIGNING)</div>
<div class="t " style="left:76.00px;top:719.03px;font-size:10px;line-height:10px;color:#000;font-weight:bold;">X</div>
<div class="t " style="left:383.00px;top:717.94px;font-size:6.57px;line-height:6.57px;color:#1e1e1e;">Date</div>
<div class="t " style="left:70.00px;top:781.21px;font-size:6.6px;line-height:6.6px;color:#222;">DWC FORM-1 (Rev. 10/05) Page 3</div>
<div class="t " style="left:395.50px;top:781.01px;font-size:6.6px;line-height:6.6px;color:#222;">DIVISION OF WORKERS' COMPENSATION</div>
<svg style="left:196px;top:750px" width="178" height="32"><rect x="1.80" y="0" width="2.20" height="32" fill="#000"/><rect x="6.00" y="0" width="2.70" height="32" fill="#888"/><rect x="8.70" y="0" width="2.10" height="32" fill="#000"/><rect x="10.80" y="0" width="2.50" height="32" fill="#666"/><rect x="13.30" y="0" width="1.70" height="32" fill="#000"/><rect x="16.00" y="0" width="3.20" height="32" fill="#b4b4b4"/><rect x="19.90" y="0" width="1.40" height="32" fill="#333"/><rect x="21.30" y="0" width="2.80" height="32" fill="#000"/><rect x="25.30" y="0" width="2.60" height="32" fill="#000"/><rect x="30.00" y="0" width="3.80" height="32" fill="#999"/><rect x="33.80" y="0" width="3.10" height="32" fill="#000"/><rect x="38.00" y="0" width="1.00" height="32" fill="#888"/><rect x="41.80" y="0" width="1.70" height="32" fill="#000"/><rect x="43.50" y="0" width="1.10" height="32" fill="#888"/><rect x="44.60" y="0" width="1.00" height="32" fill="#333"/><rect x="45.60" y="0" width="3.20" height="32" fill="#000"/><rect x="50.10" y="0" width="3.50" height="32" fill="#444"/><rect x="53.60" y="0" width="1.10" height="32" fill="#000"/><rect x="54.70" y="0" width="2.10" height="32" fill="#b4b4b4"/><rect x="56.80" y="0" width="2.00" height="32" fill="#000"/><rect x="58.80" y="0" width="1.40" height="32" fill="#888"/><rect x="60.20" y="0" width="1.40" height="32" fill="#333"/><rect x="64.10" y="0" width="2.10" height="32" fill="#999"/><rect x="66.20" y="0" width="2.40" height="32" fill="#000"/><rect x="70.00" y="0" width="2.80" height="32" fill="#000"/><rect x="74.90" y="0" width="4.80" height="32" fill="#b4b4b4"/><rect x="79.70" y="0" width="1.40" height="32" fill="#333"/><rect x="82.20" y="0" width="2.00" height="32" fill="#000"/><rect x="86.30" y="0" width="1.10" height="32" fill="#333"/><rect x="88.00" y="0" width="1.00" height="32" fill="#444"/><rect x="89.70" y="0" width="2.80" height="32" fill="#000"/><rect x="92.50" y="0" width="1.10" height="32" fill="#888"/><rect x="93.60" y="0" width="2.10" height="32" fill="#000"/><rect x="95.70" y="0" width="2.00" height="32" fill="#666"/><rect x="97.70" y="0" width="1.80" height="32" fill="#000"/><rect x="100.20" y="0" width="2.80" height="32" fill="#b4b4b4"/><rect x="105.00" y="0" width="1.00" height="32" fill="#444"/><rect x="106.00" y="0" width="2.90" height="32" fill="#666"/><rect x="108.90" y="0" width="2.80" height="32" fill="#000"/><rect x="111.70" y="0" width="2.00" height="32" fill="#b4b4b4"/><rect x="113.70" y="0" width="1.10" height="32" fill="#000"/><rect x="115.50" y="0" width="0.70" height="32" fill="#444"/><rect x="116.20" y="0" width="1.00" height="32" fill="#000"/><rect x="120.00" y="0" width="4.20" height="32" fill="#000"/><rect x="124.20" y="0" width="1.70" height="32" fill="#888"/><rect x="125.90" y="0" width="3.10" height="32" fill="#b4b4b4"/><rect x="129.00" y="0" width="1.40" height="32" fill="#444"/><rect x="130.40" y="0" width="2.80" height="32" fill="#000"/><rect x="135.30" y="0" width="2.80" height="32" fill="#000"/><rect x="139.10" y="0" width="2.80" height="32" fill="#000"/><rect x="143.00" y="0" width="0.70" height="32" fill="#888"/><rect x="144.70" y="0" width="3.10" height="32" fill="#000"/><rect x="147.80" y="0" width="1.40" height="32" fill="#888"/><rect x="149.20" y="0" width="3.50" height="32" fill="#d0d0d0"/><rect x="152.70" y="0" width="3.10" height="32" fill="#000"/><rect x="156.90" y="0" width="0.70" height="32" fill="#333"/><rect x="159.00" y="0" width="1.00" height="32" fill="#888"/><rect x="160.00" y="0" width="1.80" height="32" fill="#333"/><rect x="165.60" y="0" width="0.70" height="32" fill="#333"/><rect x="167.30" y="0" width="3.90" height="32" fill="#000"/><rect x="171.20" y="0" width="1.40" height="32" fill="#888"/><rect x="172.60" y="0" width="1.00" height="32" fill="#333"/><rect x="173.60" y="0" width="2.40" height="32" fill="#b4b4b4"/></svg>
<div class="r" style="left:641px;top:62px;width:641px;height:755px;background:#ffffff;border:1px solid #d9d9d9;box-sizing:border-box;"></div>
<div class="r" style="left:701px;top:44px;width:39px;height:19px;background:#f0f0f0;border:1px solid #d9d9d9;box-sizing:border-box;"></div>
<div class="t ui" style="left:706.50px;top:49.79px;font-size:10.4px;line-height:10.4px;color:#000;">Table</div>
<div class="r" style="left:641px;top:42px;width:61px;height:21px;background:#ffffff;border:1px solid #d9d9d9;box-sizing:border-box;border-bottom:none;"></div>
<div class="t ui" style="left:649.50px;top:47.99px;font-size:10.4px;line-height:10.4px;color:#000;">Individual</div>
<div class="t ui" style="left:646.50px;top:69.29px;font-size:10.4px;line-height:10.4px;color:#000;">Set the values of the following fields:</div>
<div class="r" style="left:646px;top:83px;width:631px;height:547px;background:#ababab;border:1px solid #000;box-sizing:border-box;"></div>
<div class="r" style="left:647px;top:84px;width:613px;height:17px;background:#ffffff;"></div>
<div class="t ui" style="left:654.50px;top:88.89px;font-size:10.4px;line-height:10.4px;color:#000;">Field</div>
<div class="t ui" style="left:766.00px;top:88.89px;font-size:10.4px;line-height:10.4px;color:#000;">Value</div>
<div class="r" style="left:758px;top:84px;width:1px;height:17px;background:#e4e4e4;"></div>
<div class="r" style="left:1207px;top:84px;width:1px;height:17px;background:#e4e4e4;"></div>
<div class="r" style="left:1258px;top:84px;width:1px;height:17px;background:#e4e4e4;"></div>
<div class="r" style="left:647px;top:101px;width:613px;height:22px;background:#ffffff;"></div>
<div class="r" style="left:647px;top:123px;width:613px;height:22px;background:#ffffff;"></div>
<div class="r" style="left:647px;top:145px;width:613px;height:22px;background:#ffffff;"></div>
<div class="r" style="left:647px;top:167px;width:613px;height:22px;background:#ffffff;"></div>
<div class="r" style="left:647px;top:189px;width:613px;height:22px;background:#ffffff;"></div>
<div class="r" style="left:647px;top:211px;width:613px;height:22px;background:#ffffff;"></div>
<div class="r" style="left:647px;top:233px;width:613px;height:22px;background:#ffffff;"></div>
<div class="r" style="left:647px;top:255px;width:613px;height:22px;background:#ffffff;"></div>
<div class="r" style="left:647px;top:277px;width:613px;height:22px;background:#ffffff;"></div>
<div class="r" style="left:647px;top:299px;width:613px;height:22px;background:#ffffff;"></div>
<div class="r" style="left:647px;top:321px;width:613px;height:22px;background:#ffffff;"></div>
<div class="r" style="left:647px;top:343px;width:613px;height:22px;background:#ffffff;"></div>
<div class="r" style="left:647px;top:365px;width:613px;height:22px;background:#ffffff;"></div>
<div class="r" style="left:647px;top:387px;width:613px;height:22px;background:#ffffff;"></div>
<div class="r" style="left:647px;top:409px;width:613px;height:22px;background:#ffffff;"></div>
<div class="r" style="left:647px;top:431px;width:613px;height:22px;background:#ffffff;"></div>
<div class="r" style="left:647px;top:453px;width:613px;height:22px;background:#ffffff;"></div>
<div class="r" style="left:647px;top:475px;width:613px;height:22px;background:#ffffff;"></div>
<div class="r" style="left:647px;top:497px;width:613px;height:22px;background:#ffffff;"></div>
<div class="r" style="left:647px;top:519px;width:613px;height:22px;background:#ffffff;"></div>
<div class="r" style="left:647px;top:541px;width:613px;height:22px;background:#ffffff;"></div>
<div class="r" style="left:647px;top:563px;width:613px;height:22px;background:#ffffff;"></div>
<div class="r" style="left:647px;top:586px;width:611px;height:21px;background:#0078d7;"></div>
<div class="r" style="left:648px;top:123px;width:610px;height:1px;background:#e3e3e3;"></div>
<div class="r" style="left:758px;top:101px;width:1px;height:22px;background:#e3e3e3;"></div>
<div class="r" style="left:1207px;top:101px;width:1px;height:22px;background:#e3e3e3;"></div>
<div class="r" style="left:1258px;top:101px;width:1px;height:23px;background:#e3e3e3;"></div>
<div class="t ui" style="left:651.20px;top:108.99px;font-size:10.4px;line-height:10.4px;color:#9b9b9b;">State</div>
<div class="t ui" style="left:762.10px;top:108.99px;font-size:10.4px;line-height:10.4px;color:#000;">%(RetrieveBusinessProcessVariables_State)</div>
<div class="r" style="left:1188px;top:103px;width:18px;height:18px;background:#e1e1e1;border:1px solid #adadad;box-sizing:border-box;"></div>
<svg style="left:1194px;top:109.6px" width="6" height="7"><path d="M0.8 0.9 L4.9 3.1 L0.8 5.3" fill="none" stroke="#2e2e2e" stroke-width="0.95"/></svg>
<div class="t ui" style="left:1212.30px;top:108.69px;font-size:10.4px;line-height:10.4px;color:#0000ff;text-decoration:underline;">Remove</div>
<div class="r" style="left:648px;top:145px;width:610px;height:1px;background:#e3e3e3;"></div>
<div class="r" style="left:758px;top:123px;width:1px;height:22px;background:#e3e3e3;"></div>
<div class="r" style="left:1207px;top:123px;width:1px;height:22px;background:#e3e3e3;"></div>
<div class="r" style="left:1258px;top:123px;width:1px;height:23px;background:#e3e3e3;"></div>
<div class="t ui" style="left:651.20px;top:130.99px;font-size:10.4px;line-height:10.4px;color:#9b9b9b;">ZIP</div>
<div class="t ui" style="left:762.10px;top:130.99px;font-size:10.4px;line-height:10.4px;color:#000;">%(RetrieveBusinessProcessVariables_ZIP)</div>
<div class="r" style="left:1188px;top:125px;width:18px;height:18px;background:#e1e1e1;border:1px solid #adadad;box-sizing:border-box;"></div>
<svg style="left:1194px;top:131.6px" width="6" height="7"><path d="M0.8 0.9 L4.9 3.1 L0.8 5.3" fill="none" stroke="#2e2e2e" stroke-width="0.95"/></svg>
<div class="t ui" style="left:1212.30px;top:130.69px;font-size:10.4px;line-height:10.4px;color:#0000ff;text-decoration:underline;">Remove</div>
<div class="r" style="left:648px;top:167px;width:610px;height:1px;background:#e3e3e3;"></div>
<div class="r" style="left:758px;top:145px;width:1px;height:22px;background:#e3e3e3;"></div>
<div class="r" style="left:1207px;top:145px;width:1px;height:22px;background:#e3e3e3;"></div>
<div class="r" style="left:1258px;top:145px;width:1px;height:23px;background:#e3e3e3;"></div>
<div class="t ui" style="left:651.20px;top:152.99px;font-size:10.4px;line-height:10.4px;color:#9b9b9b;">County</div>
<div class="t ui" style="left:762.10px;top:152.99px;font-size:10.4px;line-height:10.4px;color:#000;">%(RetrieveBusinessProcessVariables_County)</div>
<div class="r" style="left:1188px;top:147px;width:18px;height:18px;background:#e1e1e1;border:1px solid #adadad;box-sizing:border-box;"></div>
<svg style="left:1194px;top:153.6px" width="6" height="7"><path d="M0.8 0.9 L4.9 3.1 L0.8 5.3" fill="none" stroke="#2e2e2e" stroke-width="0.95"/></svg>
<div class="t ui" style="left:1212.30px;top:152.69px;font-size:10.4px;line-height:10.4px;color:#0000ff;text-decoration:underline;">Remove</div>
<div class="r" style="left:648px;top:189px;width:610px;height:1px;background:#e3e3e3;"></div>
<div class="r" style="left:758px;top:167px;width:1px;height:22px;background:#e3e3e3;"></div>
<div class="r" style="left:1207px;top:167px;width:1px;height:22px;background:#e3e3e3;"></div>
<div class="r" style="left:1258px;top:167px;width:1px;height:23px;background:#e3e3e3;"></div>
<div class="t ui" style="left:651.20px;top:174.99px;font-size:10.4px;line-height:10.4px;color:#9b9b9b;">Dr_State</div>
<div class="t ui" style="left:762.10px;top:174.99px;font-size:10.4px;line-height:10.4px;color:#000;">%(RetrieveBusinessProcessVariables_Dr_State)</div>
<div class="r" style="left:1188px;top:169px;width:18px;height:18px;background:#e1e1e1;border:1px solid #adadad;box-sizing:border-box;"></div>
<svg style="left:1194px;top:175.6px" width="6" height="7"><path d="M0.8 0.9 L4.9 3.1 L0.8 5.3" fill="none" stroke="#2e2e2e" stroke-width="0.95"/></svg>
<div class="t ui" style="left:1212.30px;top:174.69px;font-size:10.4px;line-height:10.4px;color:#0000ff;text-decoration:underline;">Remove</div>
<div class="r" style="left:648px;top:211px;width:610px;height:1px;background:#e3e3e3;"></div>
<div class="r" style="left:758px;top:189px;width:1px;height:22px;background:#e3e3e3;"></div>
<div class="r" style="left:1207px;top:189px;width:1px;height:22px;background:#e3e3e3;"></div>
<div class="r" style="left:1258px;top:189px;width:1px;height:23px;background:#e3e3e3;"></div>
<div class="t ui" style="left:651.20px;top:196.99px;font-size:10.4px;line-height:10.4px;color:#9b9b9b;">Dr_ZIP</div>
<div class="t ui" style="left:762.10px;top:196.99px;font-size:10.4px;line-height:10.4px;color:#000;">%(RetrieveBusinessProcessVariables_Dr_ZIP)</div>
<div class="r" style="left:1188px;top:191px;width:18px;height:18px;background:#e1e1e1;border:1px solid #adadad;box-sizing:border-box;"></div>
<svg style="left:1194px;top:197.6px" width="6" height="7"><path d="M0.8 0.9 L4.9 3.1 L0.8 5.3" fill="none" stroke="#2e2e2e" stroke-width="0.95"/></svg>
<div class="t ui" style="left:1212.30px;top:196.69px;font-size:10.4px;line-height:10.4px;color:#0000ff;text-decoration:underline;">Remove</div>
<div class="r" style="left:648px;top:233px;width:610px;height:1px;background:#e3e3e3;"></div>
<div class="r" style="left:758px;top:211px;width:1px;height:22px;background:#e3e3e3;"></div>
<div class="r" style="left:1207px;top:211px;width:1px;height:22px;background:#e3e3e3;"></div>
<div class="r" style="left:1258px;top:211px;width:1px;height:23px;background:#e3e3e3;"></div>
<div class="t ui" style="left:651.20px;top:218.99px;font-size:10.4px;line-height:10.4px;color:#9b9b9b;">NAICS_System_Code</div>
<div class="t ui" style="left:762.10px;top:218.99px;font-size:10.4px;line-height:10.4px;color:#000;">%(RetrieveBusinessProcessVariables_NAICS_System_Code)</div>
<div class="r" style="left:1188px;top:213px;width:18px;height:18px;background:#e1e1e1;border:1px solid #adadad;box-sizing:border-box;"></div>
<svg style="left:1194px;top:219.6px" width="6" height="7"><path d="M0.8 0.9 L4.9 3.1 L0.8 5.3" fill="none" stroke="#2e2e2e" stroke-width="0.95"/></svg>
<div class="t ui" style="left:1212.30px;top:218.69px;font-size:10.4px;line-height:10.4px;color:#0000ff;text-decoration:underline;">Remove</div>
<div class="r" style="left:648px;top:255px;width:610px;height:1px;background:#e3e3e3;"></div>
<div class="r" style="left:758px;top:233px;width:1px;height:22px;background:#e3e3e3;"></div>
<div class="r" style="left:1207px;top:233px;width:1px;height:22px;background:#e3e3e3;"></div>
<div class="r" style="left:1258px;top:233px;width:1px;height:23px;background:#e3e3e3;"></div>
<div class="t ui" style="left:651.20px;top:240.99px;font-size:10.4px;line-height:10.4px;color:#9b9b9b;">Injury_Business</div>
<div class="t ui" style="left:762.10px;top:240.99px;font-size:10.4px;line-height:10.4px;color:#000;">%(RetrieveBusinessProcessVariables_Injury_Business)</div>
<div class="r" style="left:1188px;top:235px;width:18px;height:18px;background:#e1e1e1;border:1px solid #adadad;box-sizing:border-box;"></div>
<svg style="left:1194px;top:241.6px" width="6" height="7"><path d="M0.8 0.9 L4.9 3.1 L0.8 5.3" fill="none" stroke="#2e2e2e" stroke-width="0.95"/></svg>
<div class="t ui" style="left:1212.30px;top:240.69px;font-size:10.4px;line-height:10.4px;color:#0000ff;text-decoration:underline;">Remove</div>
<div class="r" style="left:648px;top:277px;width:610px;height:1px;background:#e3e3e3;"></div>
<div class="r" style="left:758px;top:255px;width:1px;height:22px;background:#e3e3e3;"></div>
<div class="r" style="left:1207px;top:255px;width:1px;height:22px;background:#e3e3e3;"></div>
<div class="r" style="left:1258px;top:255px;width:1px;height:23px;background:#e3e3e3;"></div>
<div class="t ui" style="left:651.20px;top:262.99px;font-size:10.4px;line-height:10.4px;color:#9b9b9b;">Injury_Address</div>
<div class="t ui" style="left:762.10px;top:262.99px;font-size:10.4px;line-height:10.4px;color:#000;">%(RetrieveBusinessProcessVariables_Injury_Address)</div>
<div class="r" style="left:1188px;top:257px;width:18px;height:18px;background:#e1e1e1;border:1px solid #adadad;box-sizing:border-box;"></div>
<svg style="left:1194px;top:263.6px" width="6" height="7"><path d="M0.8 0.9 L4.9 3.1 L0.8 5.3" fill="none" stroke="#2e2e2e" stroke-width="0.95"/></svg>
<div class="t ui" style="left:1212.30px;top:262.69px;font-size:10.4px;line-height:10.4px;color:#0000ff;text-decoration:underline;">Remove</div>
<div class="r" style="left:648px;top:299px;width:610px;height:1px;background:#e3e3e3;"></div>
<div class="r" style="left:758px;top:277px;width:1px;height:22px;background:#e3e3e3;"></div>
<div class="r" style="left:1207px;top:277px;width:1px;height:22px;background:#e3e3e3;"></div>
<div class="r" style="left:1258px;top:277px;width:1px;height:23px;background:#e3e3e3;"></div>
<div class="t ui" style="left:651.20px;top:284.99px;font-size:10.4px;line-height:10.4px;color:#9b9b9b;">Injury_ZIP</div>
<div class="t ui" style="left:762.10px;top:284.99px;font-size:10.4px;line-height:10.4px;color:#000;">%(RetrieveBusinessProcessVariables_Injury_ZIP)</div>
<div class="r" style="left:1188px;top:279px;width:18px;height:18px;background:#e1e1e1;border:1px solid #adadad;box-sizing:border-box;"></div>
<svg style="left:1194px;top:285.6px" width="6" height="7"><path d="M0.8 0.9 L4.9 3.1 L0.8 5.3" fill="none" stroke="#2e2e2e" stroke-width="0.95"/></svg>
<div class="t ui" style="left:1212.30px;top:284.69px;font-size:10.4px;line-height:10.4px;color:#0000ff;text-decoration:underline;">Remove</div>
<div class="r" style="left:648px;top:321px;width:610px;height:1px;background:#e3e3e3;"></div>
<div class="r" style="left:758px;top:299px;width:1px;height:22px;background:#e3e3e3;"></div>
<div class="r" style="left:1207px;top:299px;width:1px;height:22px;background:#e3e3e3;"></div>
<div class="r" style="left:1258px;top:299px;width:1px;height:23px;background:#e3e3e3;"></div>
<div class="t ui" style="left:651.20px;top:306.99px;font-size:10.4px;line-height:10.4px;color:#9b9b9b;">Business_Phone</div>
<div class="t ui" style="left:762.10px;top:306.99px;font-size:10.4px;line-height:10.4px;color:#000;">%(RetrieveBusinessProcessVariables_Business_Telephone)</div>
<div class="r" style="left:1188px;top:301px;width:18px;height:18px;background:#e1e1e1;border:1px solid #adadad;box-sizing:border-box;"></div>
<svg style="left:1194px;top:307.6px" width="6" height="7"><path d="M0.8 0.9 L4.9 3.1 L0.8 5.3" fill="none" stroke="#2e2e2e" stroke-width="0.95"/></svg>
<div class="t ui" style="left:1212.30px;top:306.69px;font-size:10.4px;line-height:10.4px;color:#0000ff;text-decoration:underline;">Remove</div>
<div class="r" style="left:648px;top:343px;width:610px;height:1px;background:#e3e3e3;"></div>
<div class="r" style="left:758px;top:321px;width:1px;height:22px;background:#e3e3e3;"></div>
<div class="r" style="left:1207px;top:321px;width:1px;height:22px;background:#e3e3e3;"></div>
<div class="r" style="left:1258px;top:321px;width:1px;height:23px;background:#e3e3e3;"></div>
<div class="t ui" style="left:651.20px;top:328.99px;font-size:10.4px;line-height:10.4px;color:#9b9b9b;">Business_State</div>
<div class="t ui" style="left:762.10px;top:328.99px;font-size:10.4px;line-height:10.4px;color:#000;">%(RetrieveBusinessProcessVariables_Business_State)</div>
<div class="r" style="left:1188px;top:323px;width:18px;height:18px;background:#e1e1e1;border:1px solid #adadad;box-sizing:border-box;"></div>
<svg style="left:1194px;top:329.6px" width="6" height="7"><path d="M0.8 0.9 L4.9 3.1 L0.8 5.3" fill="none" stroke="#2e2e2e" stroke-width="0.95"/></svg>
<div class="t ui" style="left:1212.30px;top:328.69px;font-size:10.4px;line-height:10.4px;color:#0000ff;text-decoration:underline;">Remove</div>
<div class="r" style="left:648px;top:365px;width:610px;height:1px;background:#e3e3e3;"></div>
<div class="r" style="left:758px;top:343px;width:1px;height:22px;background:#e3e3e3;"></div>
<div class="r" style="left:1207px;top:343px;width:1px;height:22px;background:#e3e3e3;"></div>
<div class="r" style="left:1258px;top:343px;width:1px;height:23px;background:#e3e3e3;"></div>
<div class="t ui" style="left:651.20px;top:350.99px;font-size:10.4px;line-height:10.4px;color:#9b9b9b;">Business_ZIP</div>
<div class="t ui" style="left:762.10px;top:350.99px;font-size:10.4px;line-height:10.4px;color:#000;">%(RetrieveBusinessProcessVariables_Business_ZIP)</div>
<div class="r" style="left:1188px;top:345px;width:18px;height:18px;background:#e1e1e1;border:1px solid #adadad;box-sizing:border-box;"></div>
<svg style="left:1194px;top:351.6px" width="6" height="7"><path d="M0.8 0.9 L4.9 3.1 L0.8 5.3" fill="none" stroke="#2e2e2e" stroke-width="0.95"/></svg>
<div class="t ui" style="left:1212.30px;top:350.69px;font-size:10.4px;line-height:10.4px;color:#0000ff;text-decoration:underline;">Remove</div>
<div class="r" style="left:648px;top:387px;width:610px;height:1px;background:#e3e3e3;"></div>
<div class="r" style="left:758px;top:365px;width:1px;height:22px;background:#e3e3e3;"></div>
<div class="r" style="left:1258px;top:365px;width:1px;height:23px;background:#e3e3e3;"></div>
<div class="t ui" style="left:651.20px;top:372.99px;font-size:10.4px;line-height:10.4px;color:#9b9b9b;">RegYes</div>
<div class="r" style="left:762px;top:366px;width:422px;height:21px;background:#e1e1e1;border:1px solid #adadad;box-sizing:border-box;"></div>
<div class="r" style="left:1167px;top:366px;width:1px;height:21px;background:#adadad;"></div>
<svg style="left:1170px;top:374px" width="10" height="6"><path d="M0.8 0.8 L4.9 4.9 L9 0.8" fill="none" stroke="#404040" stroke-width="1.2"/></svg>
<div class="t ui" style="left:765.20px;top:372.69px;font-size:10.4px;line-height:10.4px;color:#000;">%(Reg_Yes)</div>
<div class="r" style="left:1189px;top:367px;width:18px;height:18px;background:#e1e1e1;border:1px solid #adadad;box-sizing:border-box;"></div>
<svg style="left:1195px;top:373.6px" width="6" height="7"><path d="M0.8 0.9 L4.9 3.1 L0.8 5.3" fill="none" stroke="#2e2e2e" stroke-width="0.95"/></svg>
<div class="t ui" style="left:1212.30px;top:372.69px;font-size:10.4px;line-height:10.4px;color:#0000ff;text-decoration:underline;">Remove</div>
<div class="r" style="left:648px;top:409px;width:610px;height:1px;background:#e3e3e3;"></div>
<div class="r" style="left:758px;top:387px;width:1px;height:22px;background:#e3e3e3;"></div>
<div class="r" style="left:1258px;top:387px;width:1px;height:23px;background:#e3e3e3;"></div>
<div class="t ui" style="left:651.20px;top:394.99px;font-size:10.4px;line-height:10.4px;color:#9b9b9b;">RegNo</div>
<div class="r" style="left:762px;top:388px;width:422px;height:21px;background:#e1e1e1;border:1px solid #adadad;box-sizing:border-box;"></div>
<div class="r" style="left:1167px;top:388px;width:1px;height:21px;background:#adadad;"></div>
<svg style="left:1170px;top:396px" width="10" height="6"><path d="M0.8 0.8 L4.9 4.9 L9 0.8" fill="none" stroke="#404040" stroke-width="1.2"/></svg>
<div class="t ui" style="left:765.20px;top:394.69px;font-size:10.4px;line-height:10.4px;color:#000;">%(Reg_No)</div>
<div class="r" style="left:1189px;top:389px;width:18px;height:18px;background:#e1e1e1;border:1px solid #adadad;box-sizing:border-box;"></div>
<svg style="left:1195px;top:395.6px" width="6" height="7"><path d="M0.8 0.9 L4.9 3.1 L0.8 5.3" fill="none" stroke="#2e2e2e" stroke-width="0.95"/></svg>
<div class="t ui" style="left:1212.30px;top:394.69px;font-size:10.4px;line-height:10.4px;color:#0000ff;text-decoration:underline;">Remove</div>
<div class="r" style="left:648px;top:431px;width:610px;height:1px;background:#e3e3e3;"></div>
<div class="r" style="left:758px;top:409px;width:1px;height:22px;background:#e3e3e3;"></div>
<div class="r" style="left:1258px;top:409px;width:1px;height:23px;background:#e3e3e3;"></div>
<div class="t ui" style="left:651.20px;top:416.99px;font-size:10.4px;line-height:10.4px;color:#9b9b9b;">Die_Yes</div>
<div class="r" style="left:762px;top:410px;width:422px;height:21px;background:#e1e1e1;border:1px solid #adadad;box-sizing:border-box;"></div>
<div class="r" style="left:1167px;top:410px;width:1px;height:21px;background:#adadad;"></div>
<svg style="left:1170px;top:418px" width="10" height="6"><path d="M0.8 0.8 L4.9 4.9 L9 0.8" fill="none" stroke="#404040" stroke-width="1.2"/></svg>
<div class="t ui" style="left:765.20px;top:416.69px;font-size:10.4px;line-height:10.4px;color:#000;">%(Death_Yes)</div>
<div class="r" style="left:1189px;top:411px;width:18px;height:18px;background:#e1e1e1;border:1px solid #adadad;box-sizing:border-box;"></div>
<svg style="left:1195px;top:417.6px" width="6" height="7"><path d="M0.8 0.9 L4.9 3.1 L0.8 5.3" fill="none" stroke="#2e2e2e" stroke-width="0.95"/></svg>
<div class="t ui" style="left:1212.30px;top:416.69px;font-size:10.4px;line-height:10.4px;color:#0000ff;text-decoration:underline;">Remove</div>
<div class="r" style="left:648px;top:453px;width:610px;height:1px;background:#e3e3e3;"></div>
<div class="r" style="left:758px;top:431px;width:1px;height:22px;background:#e3e3e3;"></div>
<div class="r" style="left:1258px;top:431px;width:1px;height:23px;background:#e3e3e3;"></div>
<div class="t ui" style="left:651.20px;top:438.99px;font-size:10.4px;line-height:10.4px;color:#9b9b9b;">Die_No</div>
<div class="r" style="left:762px;top:432px;width:422px;height:21px;background:#e1e1e1;border:1px solid #adadad;box-sizing:border-box;"></div>
<div class="r" style="left:1167px;top:432px;width:1px;height:21px;background:#adadad;"></div>
<svg style="left:1170px;top:440px" width="10" height="6"><path d="M0.8 0.8 L4.9 4.9 L9 0.8" fill="none" stroke="#404040" stroke-width="1.2"/></svg>
<div class="t ui" style="left:765.20px;top:438.69px;font-size:10.4px;line-height:10.4px;color:#000;">%(Death_No)</div>
<div class="r" style="left:1189px;top:433px;width:18px;height:18px;background:#e1e1e1;border:1px solid #adadad;box-sizing:border-box;"></div>
<svg style="left:1195px;top:439.6px" width="6" height="7"><path d="M0.8 0.9 L4.9 3.1 L0.8 5.3" fill="none" stroke="#2e2e2e" stroke-width="0.95"/></svg>
<div class="t ui" style="left:1212.30px;top:438.69px;font-size:10.4px;line-height:10.4px;color:#0000ff;text-decoration:underline;">Remove</div>
<div class="r" style="left:648px;top:475px;width:610px;height:1px;background:#e3e3e3;"></div>
<div class="r" style="left:758px;top:453px;width:1px;height:22px;background:#e3e3e3;"></div>
<div class="r" style="left:1258px;top:453px;width:1px;height:23px;background:#e3e3e3;"></div>
<div class="t ui" style="left:651.20px;top:460.99px;font-size:10.4px;line-height:10.4px;color:#9b9b9b;">TX_Yes</div>
<div class="r" style="left:762px;top:454px;width:422px;height:21px;background:#e1e1e1;border:1px solid #adadad;box-sizing:border-box;"></div>
<div class="r" style="left:1167px;top:454px;width:1px;height:21px;background:#adadad;"></div>
<svg style="left:1170px;top:462px" width="10" height="6"><path d="M0.8 0.8 L4.9 4.9 L9 0.8" fill="none" stroke="#404040" stroke-width="1.2"/></svg>
<div class="t ui" style="left:765.20px;top:460.69px;font-size:10.4px;line-height:10.4px;color:#000;">%(Texas_Yes)</div>
<div class="r" style="left:1189px;top:455px;width:18px;height:18px;background:#e1e1e1;border:1px solid #adadad;box-sizing:border-box;"></div>
<svg style="left:1195px;top:461.6px" width="6" height="7"><path d="M0.8 0.9 L4.9 3.1 L0.8 5.3" fill="none" stroke="#2e2e2e" stroke-width="0.95"/></svg>
<div class="t ui" style="left:1212.30px;top:460.69px;font-size:10.4px;line-height:10.4px;color:#0000ff;text-decoration:underline;">Remove</div>
<div class="r" style="left:648px;top:497px;width:610px;height:1px;background:#e3e3e3;"></div>
<div class="r" style="left:758px;top:475px;width:1px;height:22px;background:#e3e3e3;"></div>
<div class="r" style="left:1258px;top:475px;width:1px;height:23px;background:#e3e3e3;"></div>
<div class="t ui" style="left:651.20px;top:482.99px;font-size:10.4px;line-height:10.4px;color:#9b9b9b;">TX_No</div>
<div class="r" style="left:762px;top:476px;width:422px;height:21px;background:#e1e1e1;border:1px solid #adadad;box-sizing:border-box;"></div>
<div class="r" style="left:1167px;top:476px;width:1px;height:21px;background:#adadad;"></div>
<svg style="left:1170px;top:484px" width="10" height="6"><path d="M0.8 0.8 L4.9 4.9 L9 0.8" fill="none" stroke="#404040" stroke-width="1.2"/></svg>
<div class="t ui" style="left:765.20px;top:482.69px;font-size:10.4px;line-height:10.4px;color:#000;">%(Texas_No)</div>
<div class="r" style="left:1189px;top:477px;width:18px;height:18px;background:#e1e1e1;border:1px solid #adadad;box-sizing:border-box;"></div>
<svg style="left:1195px;top:483.6px" width="6" height="7"><path d="M0.8 0.9 L4.9 3.1 L0.8 5.3" fill="none" stroke="#2e2e2e" stroke-width="0.95"/></svg>
<div class="t ui" style="left:1212.30px;top:482.69px;font-size:10.4px;line-height:10.4px;color:#0000ff;text-decoration:underline;">Remove</div>
<div class="r" style="left:648px;top:519px;width:610px;height:1px;background:#e3e3e3;"></div>
<div class="r" style="left:758px;top:497px;width:1px;height:22px;background:#e3e3e3;"></div>
<div class="r" style="left:1258px;top:497px;width:1px;height:23px;background:#e3e3e3;"></div>
<div class="t ui" style="left:651.20px;top:504.99px;font-size:10.4px;line-height:10.4px;color:#9b9b9b;">Own_Yes</div>
<div class="r" style="left:762px;top:498px;width:422px;height:21px;background:#e1e1e1;border:1px solid #adadad;box-sizing:border-box;"></div>
<div class="r" style="left:1167px;top:498px;width:1px;height:21px;background:#adadad;"></div>
<svg style="left:1170px;top:506px" width="10" height="6"><path d="M0.8 0.8 L4.9 4.9 L9 0.8" fill="none" stroke="#404040" stroke-width="1.2"/></svg>
<div class="t ui" style="left:765.20px;top:504.69px;font-size:10.4px;line-height:10.4px;color:#000;">%(Own_Yes)</div>
<div class="r" style="left:1189px;top:499px;width:18px;height:18px;background:#e1e1e1;border:1px solid #adadad;box-sizing:border-box;"></div>
<svg style="left:1195px;top:505.6px" width="6" height="7"><path d="M0.8 0.9 L4.9 3.1 L0.8 5.3" fill="none" stroke="#2e2e2e" stroke-width="0.95"/></svg>
<div class="t ui" style="left:1212.30px;top:504.69px;font-size:10.4px;line-height:10.4px;color:#0000ff;text-decoration:underline;">Remove</div>
<div class="r" style="left:648px;top:541px;width:610px;height:1px;background:#e3e3e3;"></div>
<div class="r" style="left:758px;top:519px;width:1px;height:22px;background:#e3e3e3;"></div>
<div class="r" style="left:1258px;top:519px;width:1px;height:23px;background:#e3e3e3;"></div>
<div class="t ui" style="left:651.20px;top:526.99px;font-size:10.4px;line-height:10.4px;color:#9b9b9b;">Own_No</div>
<div class="r" style="left:762px;top:520px;width:422px;height:21px;background:#e1e1e1;border:1px solid #adadad;box-sizing:border-box;"></div>
<div class="r" style="left:1167px;top:520px;width:1px;height:21px;background:#adadad;"></div>
<svg style="left:1170px;top:528px" width="10" height="6"><path d="M0.8 0.8 L4.9 4.9 L9 0.8" fill="none" stroke="#404040" stroke-width="1.2"/></svg>
<div class="t ui" style="left:765.20px;top:526.69px;font-size:10.4px;line-height:10.4px;color:#000;">%(Own_No)</div>
<div class="r" style="left:1189px;top:521px;width:18px;height:18px;background:#e1e1e1;border:1px solid #adadad;box-sizing:border-box;"></div>
<svg style="left:1195px;top:527.6px" width="6" height="7"><path d="M0.8 0.9 L4.9 3.1 L0.8 5.3" fill="none" stroke="#2e2e2e" stroke-width="0.95"/></svg>
<div class="t ui" style="left:1212.30px;top:526.69px;font-size:10.4px;line-height:10.4px;color:#0000ff;text-decoration:underline;">Remove</div>
<div class="r" style="left:648px;top:563px;width:610px;height:1px;background:#e3e3e3;"></div>
<div class="r" style="left:758px;top:541px;width:1px;height:22px;background:#e3e3e3;"></div>
<div class="r" style="left:1207px;top:541px;width:1px;height:22px;background:#e3e3e3;"></div>
<div class="r" style="left:1258px;top:541px;width:1px;height:23px;background:#e3e3e3;"></div>
<div class="t ui" style="left:651.20px;top:548.99px;font-size:10.4px;line-height:10.4px;color:#9b9b9b;">Occupation</div>
<div class="t ui" style="left:762.10px;top:548.99px;font-size:10.4px;line-height:10.4px;color:#000;">%(RetrieveBusinessProcessVariables_Occupation)</div>
<div class="r" style="left:1188px;top:543px;width:18px;height:18px;background:#e1e1e1;border:1px solid #adadad;box-sizing:border-box;"></div>
<svg style="left:1194px;top:549.6px" width="6" height="7"><path d="M0.8 0.9 L4.9 3.1 L0.8 5.3" fill="none" stroke="#2e2e2e" stroke-width="0.95"/></svg>
<div class="t ui" style="left:1212.30px;top:548.69px;font-size:10.4px;line-height:10.4px;color:#0000ff;text-decoration:underline;">Remove</div>
<div class="r" style="left:648px;top:585px;width:610px;height:1px;background:#e3e3e3;"></div>
<div class="r" style="left:758px;top:563px;width:1px;height:22px;background:#e3e3e3;"></div>
<div class="r" style="left:1207px;top:563px;width:1px;height:22px;background:#e3e3e3;"></div>
<div class="r" style="left:1258px;top:563px;width:1px;height:23px;background:#e3e3e3;"></div>
<div class="t ui" style="left:651.20px;top:570.99px;font-size:10.4px;line-height:10.4px;color:#9b9b9b;">Comptroller</div>
<div class="t ui" style="left:762.10px;top:570.99px;font-size:10.4px;line-height:10.4px;color:#000;">%(RetrieveBusinessProcessVariables_Comptroller)</div>
<div class="r" style="left:1188px;top:565px;width:18px;height:18px;background:#e1e1e1;border:1px solid #adadad;box-sizing:border-box;"></div>
<svg style="left:1194px;top:571.6px" width="6" height="7"><path d="M0.8 0.9 L4.9 3.1 L0.8 5.3" fill="none" stroke="#2e2e2e" stroke-width="0.95"/></svg>
<div class="t ui" style="left:1212.30px;top:570.69px;font-size:10.4px;line-height:10.4px;color:#0000ff;text-decoration:underline;">Remove</div>
<div class="r" style="left:758px;top:586px;width:1px;height:21px;background:#f0f0f0;"></div>
<div class="r" style="left:1207px;top:586px;width:1px;height:21px;background:#f0f0f0;"></div>
<div class="t ui" style="left:651.20px;top:592.99px;font-size:10.4px;line-height:10.4px;color:#ffffff;">Emp_Code</div>
<div class="t ui" style="left:762.10px;top:592.99px;font-size:10.4px;line-height:10.4px;color:#ffffff;">%(RetrieveBusinessProcessVariables_Payroll_Code)</div>
<div class="r" style="left:1188px;top:587px;width:18px;height:18px;background:#e1e1e1;border:1px solid #adadad;box-sizing:border-box;"></div>
<svg style="left:1194px;top:593.6px" width="6" height="7"><path d="M0.8 0.9 L4.9 3.1 L0.8 5.3" fill="none" stroke="#2e2e2e" stroke-width="0.95"/></svg>
<div class="t ui" style="left:1212.30px;top:592.69px;font-size:10.4px;line-height:10.4px;color:#ffffff;text-decoration:underline;">Remove</div>
<svg style="left:661px;top:589px" width="91" height="21"><path d="M0 17.5 L0 20.7 L25 20.7 L25 19.3 L29 19.3 L29 18.5 L91 18.5 L91 20.7 L83 20.7 L83 19.5 L72 19.5 L72 18 Z" fill="#b8b800"/><path d="M0 18 L0 19 L25 19 L25 18 L91 18 L91 17.5 L0 17.5 Z" fill="#e6e600"/><path d="M0 4.9 L12 4.9 L12 3 L42 3 L42 2 L62 2 L62 0.7 L84 0.7 L84 1.6 L91 3 L91 18 L0 18 Z" fill="#007800"/></svg>
<div class="t ui" style="left:651.20px;top:592.99px;font-size:10.4px;line-height:10.4px;color:#f2f200;"><span style="color:#fff">E</span>mp_Code</div>
<div class="r" style="left:1260px;top:84px;width:16px;height:545px;background:#f0f0f0;"></div>
<div class="r" style="left:1261px;top:468px;width:14px;height:143px;background:#cdcdcd;"></div>
<svg style="left:1263px;top:89px" width="10" height="7"><path d="M1 5.5 L5 1.5 L9 5.5" fill="none" stroke="#606060" stroke-width="1.8"/></svg>
<svg style="left:1263px;top:617px" width="10" height="7"><path d="M1 1.5 L5 5.5 L9 1.5" fill="none" stroke="#606060" stroke-width="1.8"/></svg>
<div class="r" style="left:646px;top:634px;width:631px;height:178px;background:#ababab;border:1px solid #000;box-sizing:border-box;"></div>
<div class="r" style="left:647px;top:635px;width:629px;height:18px;background:#ffffff;"></div>
<div class="r" style="left:1235px;top:635px;width:1px;height:18px;background:#e4e4e4;"></div>
<div class="t ui" style="left:654.00px;top:639.39px;font-size:10.4px;line-height:10.4px;color:#000;">Available Fields</div>
<div class="r" style="left:10px;top:828px;width:73px;height:21px;background:#e1e1e1;border:1px solid #adadad;box-sizing:border-box;"></div>
<div class="t ui" style="left:35.20px;top:834.89px;font-size:10.4px;line-height:10.4px;color:#000;">Help</div>
<div class="r" style="left:1129px;top:828px;width:73px;height:21px;background:#e1e1e1;border:2px solid #0078d7;box-sizing:border-box;"></div>
<div class="t ui" style="left:1156.50px;top:834.89px;font-size:10.4px;line-height:10.4px;color:#000;">OK</div>
<div class="r" style="left:1210px;top:828px;width:73px;height:21px;background:#e1e1e1;border:1px solid #adadad;box-sizing:border-box;"></div>
<div class="t ui" style="left:1228.50px;top:834.89px;font-size:10.4px;line-height:10.4px;color:#000;">Cancel</div>
</body></html>
